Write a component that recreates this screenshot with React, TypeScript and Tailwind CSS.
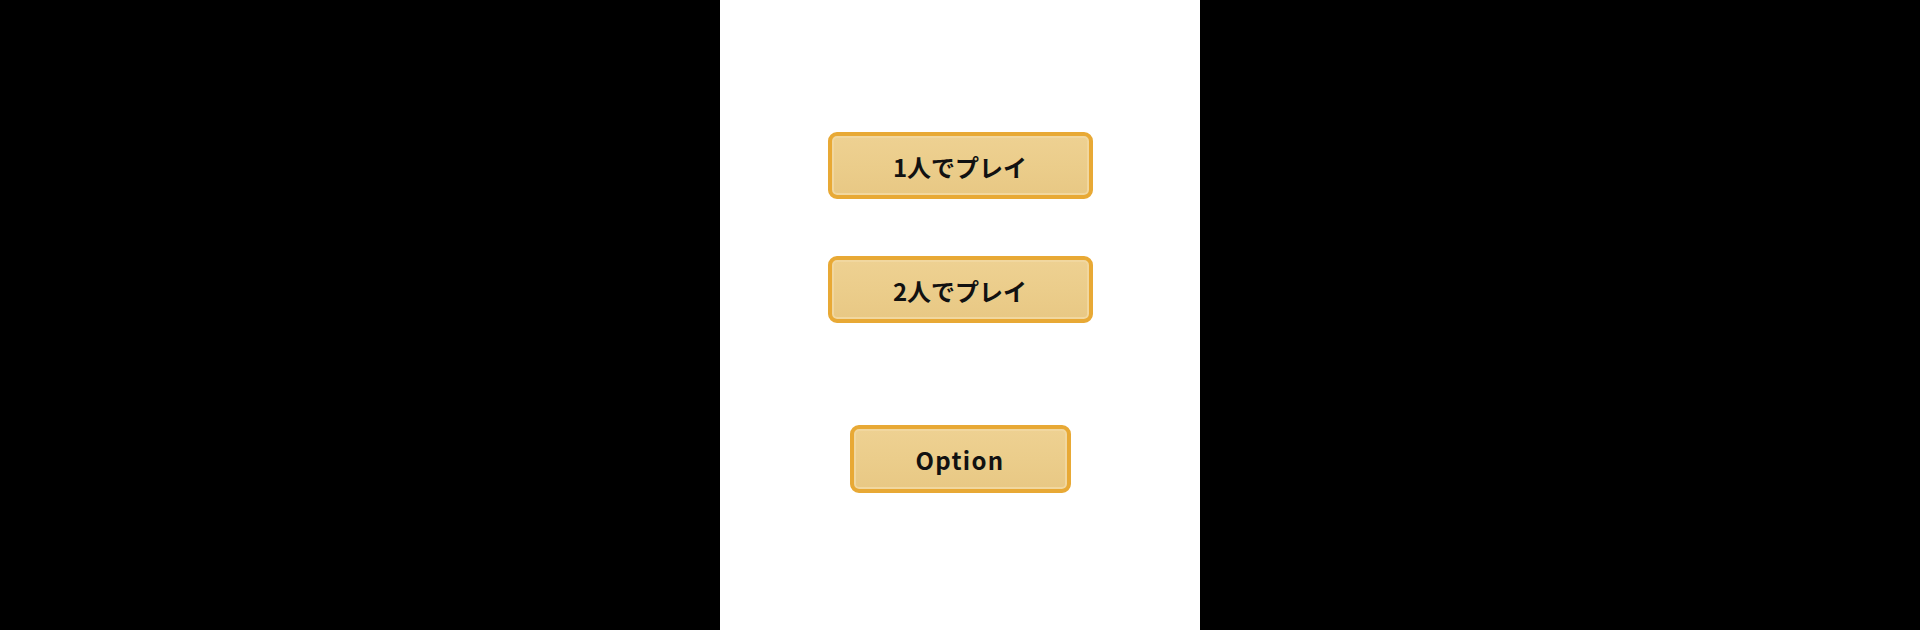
const menu = [
  { label: "1人でプレイ", wide: true },
  { label: "2人でプレイ", wide: true },
];

function MenuButton({ label, className }: { label: string; className: string }) {
  return (
    <button
      className={`flex items-center justify-center rounded-[9px] border-[4px] border-[#e8a935] bg-[linear-gradient(180deg,#eed192_0%,#ebcd8b_50%,#e8c884_100%)] shadow-[inset_0_0_0_2px_#f1d79f] pt-[2px] text-[24px] font-bold text-[#111] ${className}`}
      style={{ fontFamily: '"Noto Sans CJK JP", "Noto Sans", sans-serif' }}
    >
      {label}
    </button>
  );
}

export default function App() {
  return (
    <div className="flex h-[630px] w-full justify-center bg-black">
      <div className="flex w-[480px] flex-col items-center bg-white pt-[132px]">
        <MenuButton label={menu[0].label} className="h-[67px] w-[265px]" />
        <MenuButton label={menu[1].label} className="mt-[57px] h-[67px] w-[265px]" />
        <MenuButton label="Option" className="mt-[102px] h-[68px] w-[221px] tracking-[1.3px]" />
      </div>
    </div>
  );
}
